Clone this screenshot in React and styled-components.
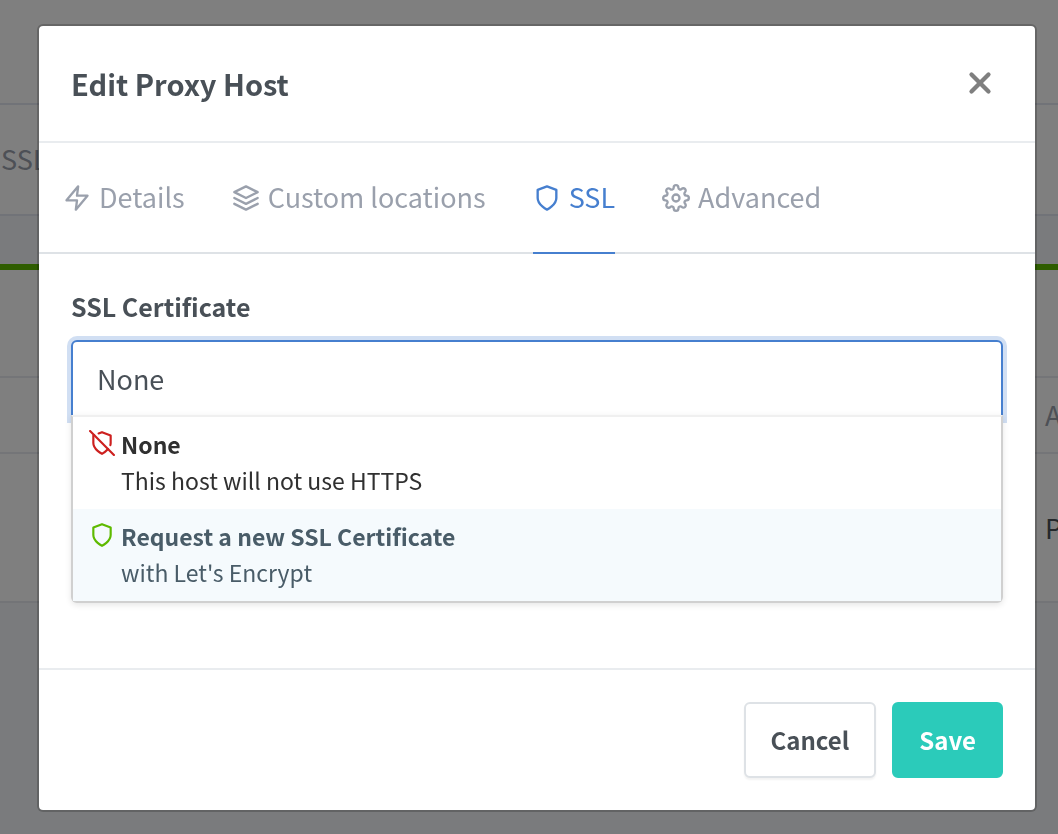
import React, { useState } from "react";
import styled, { createGlobalStyle, css } from "styled-components";
import { FiZap, FiLayers, FiShield, FiShieldOff, FiSettings, FiX } from "react-icons/fi";

const GlobalStyle = createGlobalStyle`
  *, *::before, *::after { box-sizing: border-box; }
  html, body, #root { height: 100%; }
  body {
    margin: 0;
    overflow: hidden;
    background: #f5f7fb;
    color: #495057;
    font-family: "Noto Sans CJK SC", "Noto Sans", sans-serif;
    font-size: 27px;
    line-height: 36px;
  }
  button, input { font: inherit; color: inherit; }
`;

const Page = styled.div`
  display: flex;
  flex-direction: column;
`;

const TopBar = styled.header`
  height: 105px;
  background: #fff;
  border-bottom: 2px solid #e3e7f1;
`;

const NavBar = styled.nav`
  display: flex;
  align-items: center;
  height: 111px;
  padding: 0 0 2px 1px;
  background: #fff;
  border-bottom: 2px solid #e3e7f1;
  color: #9aa0ac;
`;

const HostCard = styled.section`
  margin-top: 48px;
  background: #fff;
  border-top: 6px solid #5eba00;
  border-bottom: 2px solid #e7e9ee;
`;

const CardRow = styled.div`
  display: flex;
  align-items: center;
  justify-content: flex-end;
  height: ${({ $height }) => $height}px;
  border-bottom: ${({ $last }) => ($last ? "0" : "2px solid #e8eaf0")};
  color: ${({ $muted }) => ($muted ? "#9aa0ac" : "#495057")};
`;

const CellText = styled.span`
  width: 13px;
  white-space: nowrap;
`;

const Backdrop = styled.div`
  position: fixed;
  inset: 0;
  display: flex;
  padding: 24px 21px 22px 37px;
  background: rgba(0, 0, 0, 0.5);
  overflow: auto;
`;

const Dialog = styled.form`
  display: flex;
  flex: 1;
  flex-direction: column;
  min-width: 0;
  background: #fff;
  background-clip: padding-box;
  border: 2px solid rgba(0, 0, 0, 0.2);
  border-radius: 6px;
`;

const DialogHeader = styled.div`
  display: flex;
  align-items: center;
  justify-content: space-between;
  padding: 32px 32px 34px;
  height: 117px;
  border-bottom: 2px solid #e9ecef;
`;

const DialogTitle = styled.h1`
  margin: 0;
  font-size: 29px;
  line-height: 42px;
  font-weight: 700;
`;

const CloseButton = styled.button`
  display: flex;
  padding: 6px;
  border: 0;
  background: none;
  color: #7f7f7f;
  cursor: pointer;
`;

const TabList = styled.div`
  display: flex;
  gap: 47px;
  padding: 0 24px;
  border-bottom: 2px solid #dee2e6;
`;

const Tab = styled.button`
  display: flex;
  align-items: center;
  gap: 8px;
  height: 111px;
  margin-bottom: -2px;
  padding: 0;
  border: 0;
  border-bottom: 2px solid transparent;
  background: none;
  color: #9aa0ac;
  line-height: 34px;
  white-space: nowrap;
  cursor: pointer;
  ${({ $active }) =>
    $active &&
    css`
      color: #467fcf;
      border-color: #467fcf;
    `}
`;

const TabText = styled.span`
  padding-bottom: 2px;
`;

const DialogBody = styled.div`
  flex: 1;
  padding: 34px 32px;
`;

const FieldLabel = styled.label`
  display: block;
  margin-bottom: 16px;
  font-size: 25px;
  font-weight: 700;
`;

const Combo = styled.div`
  position: relative;
`;

const ComboInput = styled.input`
  display: block;
  width: 100%;
  height: 79px;
  padding: 0 24px 2px;
  border: 2px solid #467fcf;
  border-radius: 6px 6px 0 0;
  outline: 0;
  background: #fff;
  box-shadow: 0 0 0 4px rgba(70, 127, 207, 0.25);
  cursor: pointer;
`;

const Menu = styled.ul`
  position: absolute;
  top: 75px;
  left: 0;
  right: 0;
  margin: 0;
  padding: 0;
  list-style: none;
  background: #fff;
  border: 2px solid #d0d0d0;
  border-top-color: #f0f0f0;
  border-radius: 0 0 6px 6px;
  box-shadow: 0 2px 6px rgba(0, 0, 0, 0.1);
`;

const Option = styled.li`
  display: grid;
  grid-template-columns: 26px 1fr;
  column-gap: 6px;
  padding: 9px 16px 11px;
  font-size: 23px;
  color: ${({ $active }) => ($active ? "#495c68" : "#303030")};
  background: ${({ $active }) => ($active ? "#f5fafd" : "#fff")};
  cursor: pointer;
`;

const OptionIcon = styled.span`
  display: flex;
  padding-top: 4px;
  color: ${({ $color }) => $color};
`;

const OptionTitle = styled.strong`
  font-weight: 700;
`;

const OptionNote = styled.span`
  grid-column: 2;
`;

const DialogFooter = styled.div`
  display: flex;
  justify-content: flex-end;
  gap: 16px;
  padding: 32px;
  border-top: 2px solid #e9ecef;
`;

const Button = styled.button`
  padding: 18px 25px;
  border: 2px solid #dee2e6;
  border-radius: 6px;
  background: #fff;
  color: #495057;
  font-size: 24px;
  font-weight: 700;
  box-shadow: 0 2px 2px rgba(0, 0, 0, 0.05);
  cursor: pointer;
  ${({ $primary }) =>
    $primary &&
    css`
      border-color: #2bcbba;
      background: #2bcbba;
      color: #fff;
      box-shadow: none;
    `}
`;

const tabs = [
  { label: "Details", Icon: FiZap },
  { label: "Custom locations", Icon: FiLayers },
  { label: "SSL", Icon: FiShield },
  { label: "Advanced", Icon: FiSettings },
];

const certificates = [
  { title: "None", note: "This host will not use HTTPS", Icon: FiShieldOff, color: "#cd201f" },
  { title: "Request a new SSL Certificate", note: "with Let's Encrypt", Icon: FiShield, color: "#5eba00" },
];

export default function App() {
  const [tab, setTab] = useState("SSL");
  const [highlighted, setHighlighted] = useState(1);
  const [value, setValue] = useState("None");

  return (
    <>
      <GlobalStyle />
      <Page aria-hidden="true">
        <TopBar />
        <NavBar>SSL</NavBar>
        <HostCard>
          <CardRow $height={108} />
          <CardRow $height={76} $muted>
            <CellText>A</CellText>
          </CardRow>
          <CardRow $height={147} $last>
            <CellText>P</CellText>
          </CardRow>
        </HostCard>
      </Page>
      <Backdrop>
        <Dialog role="dialog" aria-labelledby="dialog-title" onSubmit={(e) => e.preventDefault()}>
          <DialogHeader>
            <DialogTitle id="dialog-title">Edit Proxy Host</DialogTitle>
            <CloseButton type="button" aria-label="Close">
              <FiX size={34} strokeWidth={3} />
            </CloseButton>
          </DialogHeader>
          <TabList role="tablist">
            {tabs.map(({ label, Icon }) => (
              <Tab
                key={label}
                type="button"
                role="tab"
                aria-selected={tab === label}
                $active={tab === label}
                onClick={() => setTab(label)}
              >
                <Icon size={28} />
                <TabText>{label}</TabText>
              </Tab>
            ))}
          </TabList>
          <DialogBody>
            <FieldLabel htmlFor="certificate">SSL Certificate</FieldLabel>
            <Combo>
              <ComboInput
                id="certificate"
                type="text"
                role="combobox"
                aria-expanded="true"
                aria-controls="certificate-menu"
                readOnly
                value={value}
              />
              <Menu id="certificate-menu" role="listbox">
                {certificates.map(({ title, note, Icon, color }, i) => (
                  <Option
                    key={title}
                    role="option"
                    aria-selected={value === title}
                    $active={highlighted === i}
                    onMouseEnter={() => setHighlighted(i)}
                    onClick={() => setValue(title)}
                  >
                    <OptionIcon $color={color}>
                      <Icon size={26} />
                    </OptionIcon>
                    <OptionTitle>{title}</OptionTitle>
                    <OptionNote>{note}</OptionNote>
                  </Option>
                ))}
              </Menu>
            </Combo>
          </DialogBody>
          <DialogFooter>
            <Button type="button">Cancel</Button>
            <Button type="submit" $primary>
              Save
            </Button>
          </DialogFooter>
        </Dialog>
      </Backdrop>
    </>
  );
}
